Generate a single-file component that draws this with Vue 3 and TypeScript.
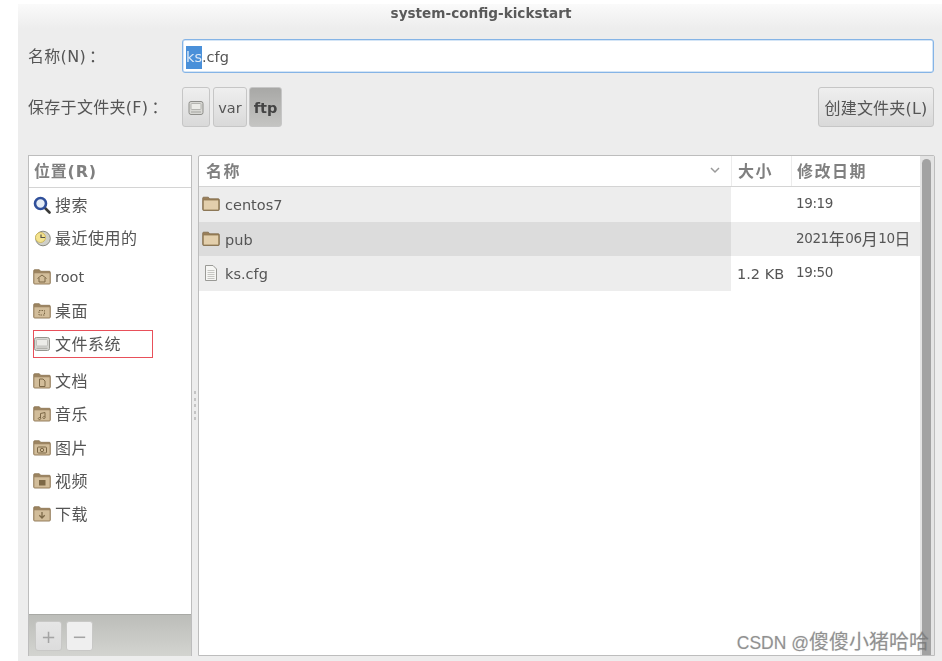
<script setup lang="ts">
type Place = { label: string; icon: string; gap?: number; marked?: boolean };
type FileRow = { name: string; kind: 'folder' | 'file'; size: string; date: string };

const places: Place[] = [
  { label: '搜索', icon: 'search' },
  { label: '最近使用的', icon: 'clock' },
  { label: 'root', icon: 'home', gap: 6 },
  { label: '桌面', icon: 'desk' },
  { label: '文件系统', icon: 'drive', marked: true },
  { label: '文档', icon: 'doc', gap: 4 },
  { label: '音乐', icon: 'music' },
  { label: '图片', icon: 'photo' },
  { label: '视频', icon: 'video' },
  { label: '下载', icon: 'down' }
];

const files: FileRow[] = [
  { name: 'centos7', kind: 'folder', size: '', date: '19:19' },
  { name: 'pub', kind: 'folder', size: '', date: '2021年06月10日' },
  { name: 'ks.cfg', kind: 'file', size: '1.2 KB', date: '19:50' }
];

const isFolder = (icon: string) => !['search', 'clock', 'drive'].includes(icon);
const isCjk = (s: string) => /[\u4e00-\u9fff]/.test(s);
const dateParts = (d: string) => d.split(/([年月日])/).filter(Boolean);
</script>

<template>
  <div class="page">
    <div class="dialog">
      <div class="titlebar">system-config-kickstart</div>

      <div class="name-row">
        <label class="field-label name-label">名称(N)<span class="colon">：</span></label>
        <div class="entry"><span class="selected">ks</span>.cfg</div>
      </div>

      <div class="folder-row">
        <label class="field-label folder-label">保存于文件夹(F)<span class="colon">：</span></label>
        <div class="path">
          <button class="path-btn drive-btn">
            <svg width="16" height="16" viewBox="0 0 16 16">
              <rect x="1" y="1.500" width="14" height="13" rx="2" fill="#d8d8d4" stroke="#8e8e8a" />
              <rect x="3" y="3.500" width="10" height="6" rx="1" fill="#ecece8" stroke="#b4b4b0" />
              <path d="M3 12h10" stroke="#a4a4a0" />
            </svg>
          </button>
          <button class="path-btn var-btn">var</button>
          <button class="path-btn ftp-btn">ftp</button>
        </div>
        <button class="create-btn">创建文件夹(L)</button>
      </div>

      <div class="panes">
        <aside class="sidebar">
          <div class="side-head">位置(R)</div>
          <ul class="place-list">
            <li
              v-for="p in places"
              :key="p.label"
              class="place"
              :class="{ gap6: p.gap === 6, gap4: p.gap === 4 }"
            >
              <svg class="place-icon" width="18" height="18" viewBox="0 0 18 18">
                <template v-if="isFolder(p.icon)">
                  <path d="M.7 15V2.700q0-1 1-1h4.600l1.400 1.600h8.600q1 0 1 1V15q0 1-1 1H1.700q-1 0-1-1z" fill="#9c8460" stroke="#8a7350" stroke-width=".8" />
                  <rect x="1.100" y="5" width="15.800" height="10.700" rx=".8" fill="#d2bd9a" stroke="#a38c68" stroke-width=".6" />
                  <g fill="none" stroke="#7c6847" stroke-width="1">
                    <path v-if="p.icon === 'home'" d="M4.500 10.500 9 7l4.500 3.500M6 10v4h6v-4" />
                    <rect v-if="p.icon === 'desk'" x="6" y="8.500" width="5.500" height="4.500" stroke-dasharray="1.500 1" />
                    <path v-if="p.icon === 'doc'" d="M6.500 7h3.500l2 2v5.500h-5.500z" />
                    <path v-if="p.icon === 'music'" d="M7.500 13V8.500l4.500-1V12M7.500 13a1.200 1 0 1 1-.1-.1M12 12a1.200 1 0 1 1-.1-.1" />
                    <template v-if="p.icon === 'photo'">
                      <rect x="4.500" y="8" width="9" height="6" rx="1" />
                      <circle cx="9" cy="11" r="1.700" />
                    </template>
                    <rect v-if="p.icon === 'video'" x="6.500" y="8.500" width="5.500" height="4.500" fill="#7c6847" />
                    <path v-if="p.icon === 'down'" d="M9 7v5.500M6.300 10.300 9 13l2.700-2.700" stroke-width="1.300" />
                  </g>
                </template>
                <template v-else-if="p.icon === 'search'">
                  <path d="m11.500 11.500 5 5" stroke="#3a3a38" stroke-width="2.600" stroke-linecap="round" />
                  <circle cx="7.500" cy="7.500" r="5.500" fill="#e6edf6" stroke="#2f4f9a" stroke-width="2.600" />
                </template>
                <template v-else-if="p.icon === 'clock'">
                  <circle cx="10" cy="9.500" r="7.300" fill="#cfcfc8" stroke="#8a8a80" />
                  <circle cx="7.500" cy="8.500" r="5" fill="#f4e38f" stroke="#c9b350" stroke-width=".8" />
                  <path d="M8 5.500v3h4" fill="none" stroke="#55524a" stroke-width="1.200" />
                </template>
                <template v-else>
                  <rect x="1.500" y="2.500" width="15" height="13" rx="2" fill="#d6d6d2" stroke="#96968f" />
                  <rect x="3.500" y="4.500" width="11" height="6.500" rx="1" fill="#ecece8" stroke="#b8b8b2" stroke-width=".8" />
                  <path d="M3.500 13.300h11" stroke="#a8a8a2" />
                </template>
              </svg>
              <span class="place-label" :class="{ cjk: isCjk(p.label) }">{{ p.label }}</span>
              <span v-if="p.marked" class="red-mark"></span>
            </li>
          </ul>
          <div class="side-tools">
            <button class="tool-btn plus">+</button>
            <button class="tool-btn minus">−</button>
          </div>
        </aside>

        <div class="grip"><i v-for="n in 5" :key="n"></i></div>

        <section class="filelist">
          <div class="table">
            <div class="thead">
              <div class="th col-name">
                <span>名称</span>
                <svg width="12" height="8" viewBox="0 0 12 8">
                  <path d="M2 2l4 4 4-4" fill="none" stroke="#9a9a9a" stroke-width="1.500" />
                </svg>
              </div>
              <div class="th col-size">大小</div>
              <div class="th col-date">修改日期</div>
            </div>
            <div v-for="(f, i) in files" :key="f.name" class="row" :class="{ odd: i === 1 }">
              <div class="td col-name name-cell">
                <svg v-if="f.kind === 'folder'" width="18" height="18" viewBox="0 0 18 18">
                  <path d="M.7 14.500V3.200q0-1 1-1h4.600l1.400 1.600h8.600q1 0 1 1v9.700q0 1-1 1H1.700q-1 0-1-1z" fill="#9a7f5a" stroke="#7f6a4a" stroke-width=".8" />
                  <rect x="1.300" y="5" width="15.400" height="10" rx="1" fill="#e3cfac" stroke="#8f7852" stroke-width=".8" />
                </svg>
                <svg v-else width="18" height="18" viewBox="0 0 18 18">
                  <path d="M3.500 1.500h7.500l3.500 3.500v11.500h-11z" fill="#f6f6f4" stroke="#9a9a96" />
                  <path d="M5.500 6.500h7M5.500 8.500h7M5.500 10.500h7M5.500 12.500h7M5.500 14.500h7" stroke="#c6c6c2" />
                </svg>
                <span class="file-name">{{ f.name }}</span>
              </div>
              <div class="td col-size size-cell">{{ f.size }}</div>
              <div class="td col-date">
                <span v-for="(part, j) in dateParts(f.date)" :key="j" :class="{ 'date-cjk': isCjk(part) }">{{ part }}</span>
              </div>
            </div>
          </div>
          <div class="scrollbar"><div class="thumb"></div></div>
        </section>
      </div>
    </div>
    <div class="watermark">CSDN @<span class="mark-cjk">傻傻小猪哈哈</span></div>
  </div>
</template>

<style>
html,
body {
  margin: 0;
  background: #fff;
}
</style>

<style scoped>
.page {
  position: relative;
  width: 942px;
  height: 661px;
  overflow: hidden;
  box-sizing: border-box;
  padding: 4px 0 0 18px;
  background: #fff;
  font-family: "DejaVu Sans", "Noto Sans CJK SC", sans-serif;
  font-size: 14.500px;
  color: #555;
}

.dialog {
  height: 100%;
  background: #ededed;
  filter: blur(0.45px);
}

.cjk {
  font-size: 16px;
  letter-spacing: 0.500px;
}

.colon {
  margin-left: 3px;
}

.titlebar {
  height: 25px;
  line-height: 19px;
  text-align: center;
  font-size: 13.600px;
  font-weight: bold;
  color: #5a5a5a;
  padding-left: 2px;
  background: linear-gradient(#fafafa, #ededed);
}

.name-row {
  display: flex;
  align-items: center;
  height: 34px;
  margin-top: 10px;
  padding: 0 8px 0 10px;
}

.field-label {
  padding-bottom: 2px;
  font-size: 16px;
  letter-spacing: 0.300px;
  color: #555;
  white-space: nowrap;
}

.name-label {
  width: 154px;
}

.entry {
  flex: 1;
  box-sizing: border-box;
  height: 34px;
  line-height: 35px;
  padding-left: 3px;
  background: #fff;
  border: 1px solid #85b4e6;
  border-radius: 3px;
  box-shadow: inset 0 0 0 0.5px #a9cbee;
  color: #555;
}

.selected {
  display: inline-block;
  height: 23px;
  line-height: 23px;
  background: #4a90d9;
  color: #dce9f7;
}

.folder-row {
  display: flex;
  align-items: center;
  height: 40px;
  margin-top: 14px;
  padding: 0 8px 0 10px;
}

.folder-label {
  width: 154px;
}

.path {
  display: flex;
  flex: 1;
  gap: 3px;
}

.path-btn,
.create-btn {
  box-sizing: border-box;
  height: 40px;
  padding: 1px 0 0;
  border: 1px solid #c6c6c6;
  border-radius: 3px;
  background: linear-gradient(#efefef, #d9d9d9);
  font: inherit;
  color: #555;
}

.drive-btn {
  display: flex;
  align-items: center;
  justify-content: center;
  width: 28px;
}

.var-btn {
  width: 34px;
}

.ftp-btn {
  width: 33px;
  margin-left: -1px;
  font-weight: bold;
  color: #444;
  background: linear-gradient(#a8a8a6, #c4c4c2);
}

.create-btn {
  width: 116px;
  padding: 0;
  font-size: 16px;
  letter-spacing: 0.200px;
}

.panes {
  display: flex;
  height: 501px;
  margin-top: 28px;
  padding-left: 10px;
}

.sidebar {
  display: flex;
  flex-direction: column;
  box-sizing: border-box;
  width: 164px;
  background: #fff;
  border: 1px solid #bdbdbd;
  border-bottom: 0;
}

.side-head {
  flex: none;
  height: 31px;
  line-height: 31px;
  padding-left: 5px;
  font-size: 16px;
  letter-spacing: 0.800px;
  font-weight: bold;
  color: #808080;
  border-bottom: 1px solid #d4d4d4;
}

.place-list {
  flex: 1;
  margin: 0;
  padding: 0;
  list-style: none;
}

.place {
  position: relative;
  display: flex;
  align-items: center;
  height: 33.300px;
  padding-left: 4px;
}

.place.gap6 {
  margin-top: 6px;
}

.place.gap4 {
  margin-top: 4px;
}

.place-icon {
  flex: none;
  margin-right: 4px;
}

.place-label {
  color: #555;
}

.place-label.cjk {
  padding-bottom: 2px;
}

.red-mark {
  position: absolute;
  left: 4px;
  top: 3px;
  width: 120px;
  height: 28px;
  box-sizing: border-box;
  border: 1px solid #e8505a;
}

.side-tools {
  flex: none;
  display: flex;
  gap: 4px;
  height: 42px;
  box-sizing: border-box;
  padding: 6px 0 0 6px;
  background: linear-gradient(#bcbdb9, #d3d4d0);
  border-top: 1px solid #a8a9a5;
}

.tool-btn {
  box-sizing: border-box;
  width: 27px;
  height: 30px;
  padding: 0;
  border: 1px solid #c8c8c6;
  border-radius: 3px;
  font: inherit;
  font-size: 18px;
  color: #a4a4a4;
  background: linear-gradient(#e6e6e6, #dcdcdc);
}

.minus {
  background: #efefef;
}

.grip {
  display: flex;
  flex-direction: column;
  align-items: center;
  justify-content: center;
  gap: 3.500px;
  width: 6px;
}

.grip i {
  width: 2px;
  height: 3px;
  background: #c4c4c4;
}

.filelist {
  display: flex;
  flex: none;
  width: 737px;
  box-sizing: border-box;
  background: #fff;
  border: 1px solid #bdbdbd;
  border-radius: 2px 2px 0 0;
}

.table {
  flex: 1;
  min-width: 0;
}

.thead {
  display: flex;
  height: 31px;
  box-sizing: border-box;
  border-bottom: 1px solid #d4d4d4;
}

.th {
  display: flex;
  align-items: center;
  justify-content: space-between;
  box-sizing: border-box;
  padding-bottom: 3px;
  font-size: 16px;
  font-weight: bold;
  color: #808080;
  letter-spacing: 1.500px;
}

.th + .th {
  border-left: 1px solid #ececec;
}

.col-name {
  width: 532px;
  padding-right: 10px;
  padding-left: 7px;
}

.col-size {
  width: 60px;
  padding-left: 6px;
}

.col-date {
  flex: 1;
  padding-left: 5px;
}

.row {
  display: flex;
  height: 34.500px;
}

.td {
  display: flex;
  align-items: center;
  box-sizing: border-box;
  color: #555;
}

.td.col-date {
  font-size: 13.500px;
  letter-spacing: -0.400px;
  padding-bottom: 2px;
}

.date-cjk {
  font-size: 16px;
  letter-spacing: 0.500px;
}

.name-cell {
  justify-content: flex-start;
  gap: 5px;
  padding-left: 3px;
  background: #ededed;
}

.file-name {
  margin-top: 2px;
}

.size-cell {
  padding-top: 1px;
}

.row.odd .name-cell {
  background: #dcdcdc;
}

.row.odd {
  background: #ededed;
}

.scrollbar {
  flex: none;
  width: 14px;
  padding: 3px 3px 0 2px;
  box-sizing: border-box;
  background: #e4e4e4;
}

.thumb {
  height: 100%;
  border-radius: 5px 5px 0 0;
  background: #a2a2a2;
}

.watermark {
  position: absolute;
  right: 13px;
  bottom: 6px;
  font-family: "Liberation Sans", "Noto Sans CJK SC", sans-serif;
  font-size: 17.500px;
  color: rgba(120, 120, 120, 0.72);
  text-shadow: 0 0 1px rgba(120, 120, 120, 0.4);
  white-space: nowrap;
}

.mark-cjk {
  font-size: 20px;
}
</style>
